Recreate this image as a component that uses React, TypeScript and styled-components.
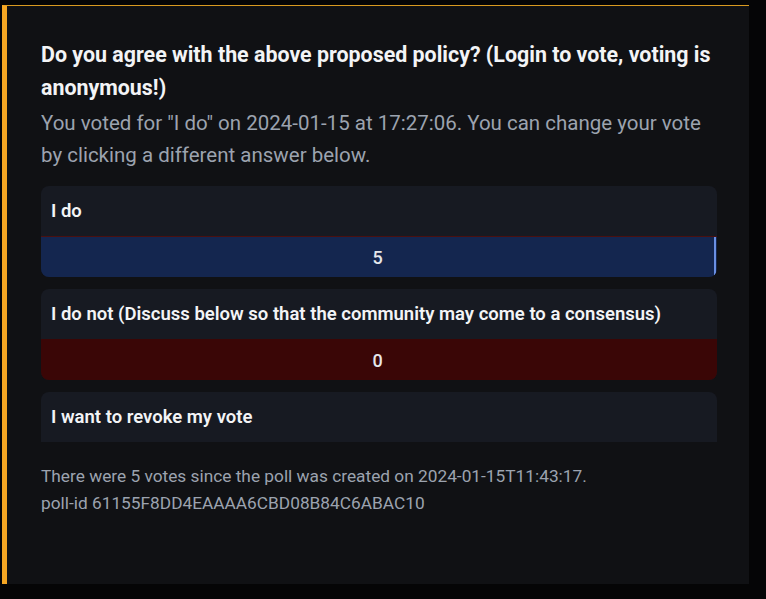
import React from 'react';
import styled, { createGlobalStyle } from 'styled-components';

const GlobalStyle = createGlobalStyle`
  html, body {
    margin: 0;
    padding: 0;
    background: #050506;
  }
  body {
    font-family: Roboto, "Liberation Sans", Arial, sans-serif;
  }
`;

const Page = styled.div`
  width: 766px;
  height: 599px;
  padding: 5px 0 0 2px;
  box-sizing: border-box;
  background: #050506;
`;

const Panel = styled.section`
  width: 747px;
  height: 579px;
  box-sizing: border-box;
  background: #101114;
  border-top: 1px solid #d99a20;
  border-left: 5px solid #f5a623;
  padding: 32px 32px 0 34px;
`;

const Question = styled.h2`
  margin: 0;
  font-size: 21.4px;
  font-weight: 700;
  line-height: 33px;
  color: #f3f4f6;
`;

const Note = styled.p`
  margin: 3px 0 15px;
  font-size: 20.5px;
  line-height: 32px;
  color: #9ca3af;
`;

const Options = styled.div`
  display: flex;
  flex-direction: column;
  gap: 12px;
`;

const Card = styled.div<{ $open?: boolean }>`
  background: #171a22;
  border-radius: ${({ $open }) => ($open ? '8px 8px 0 0' : '8px')};
  overflow: hidden;
`;

const Label = styled.div`
  height: 50px;
  line-height: 50px;
  padding: 0 10px;
  font-size: 18.5px;
  font-weight: 600;
  color: #f3f4f6;
`;

const Bar = styled.div<{ $bg: string; $line?: string }>`
  height: 41px;
  box-sizing: border-box;
  background: ${({ $bg }) => $bg};
  border-top: 1px solid ${({ $line }) => $line || 'transparent'};
  display: flex;
`;

const Fill = styled.div<{ $edge?: string }>`
  flex: 1;
  display: flex;
  align-items: center;
  justify-content: center;
  font-size: 18px;
  font-weight: 500;
  color: #e5e7eb;
  margin-right: 1px;
  border-right: 2px solid ${({ $edge }) => $edge || 'transparent'};
`;

const Footer = styled.div`
  margin-top: 21px;
  font-size: 17.3px;
  line-height: 27px;
  color: #9ca3af;
`;

export default function App() {
  return (
    <>
      <GlobalStyle />
      <Page>
        <Panel>
          <Question>
            Do you agree with the above proposed policy? (Login to vote, voting is anonymous!)
          </Question>
          <Note>
            You voted for "I do" on 2024-01-15 at 17:27:06. You can change your vote by clicking a
            different answer below.
          </Note>
          <Options>
            <Card>
              <Label>I do</Label>
              <Bar $bg="#14264f" $line="#4a1010">
                <Fill $edge="#6a8fe3">5</Fill>
              </Bar>
            </Card>
            <Card>
              <Label>I do not (Discuss below so that the community may come to a consensus)</Label>
              <Bar $bg="#3a0606">
                <Fill>0</Fill>
              </Bar>
            </Card>
            <Card $open>
              <Label>I want to revoke my vote</Label>
            </Card>
          </Options>
          <Footer>
            There were 5 votes since the poll was created on 2024-01-15T11:43:17.
            <br />
            poll-id 61155F8DD4EAAAA6CBD08B84C6ABAC10
          </Footer>
        </Panel>
      </Page>
    </>
  );
}
